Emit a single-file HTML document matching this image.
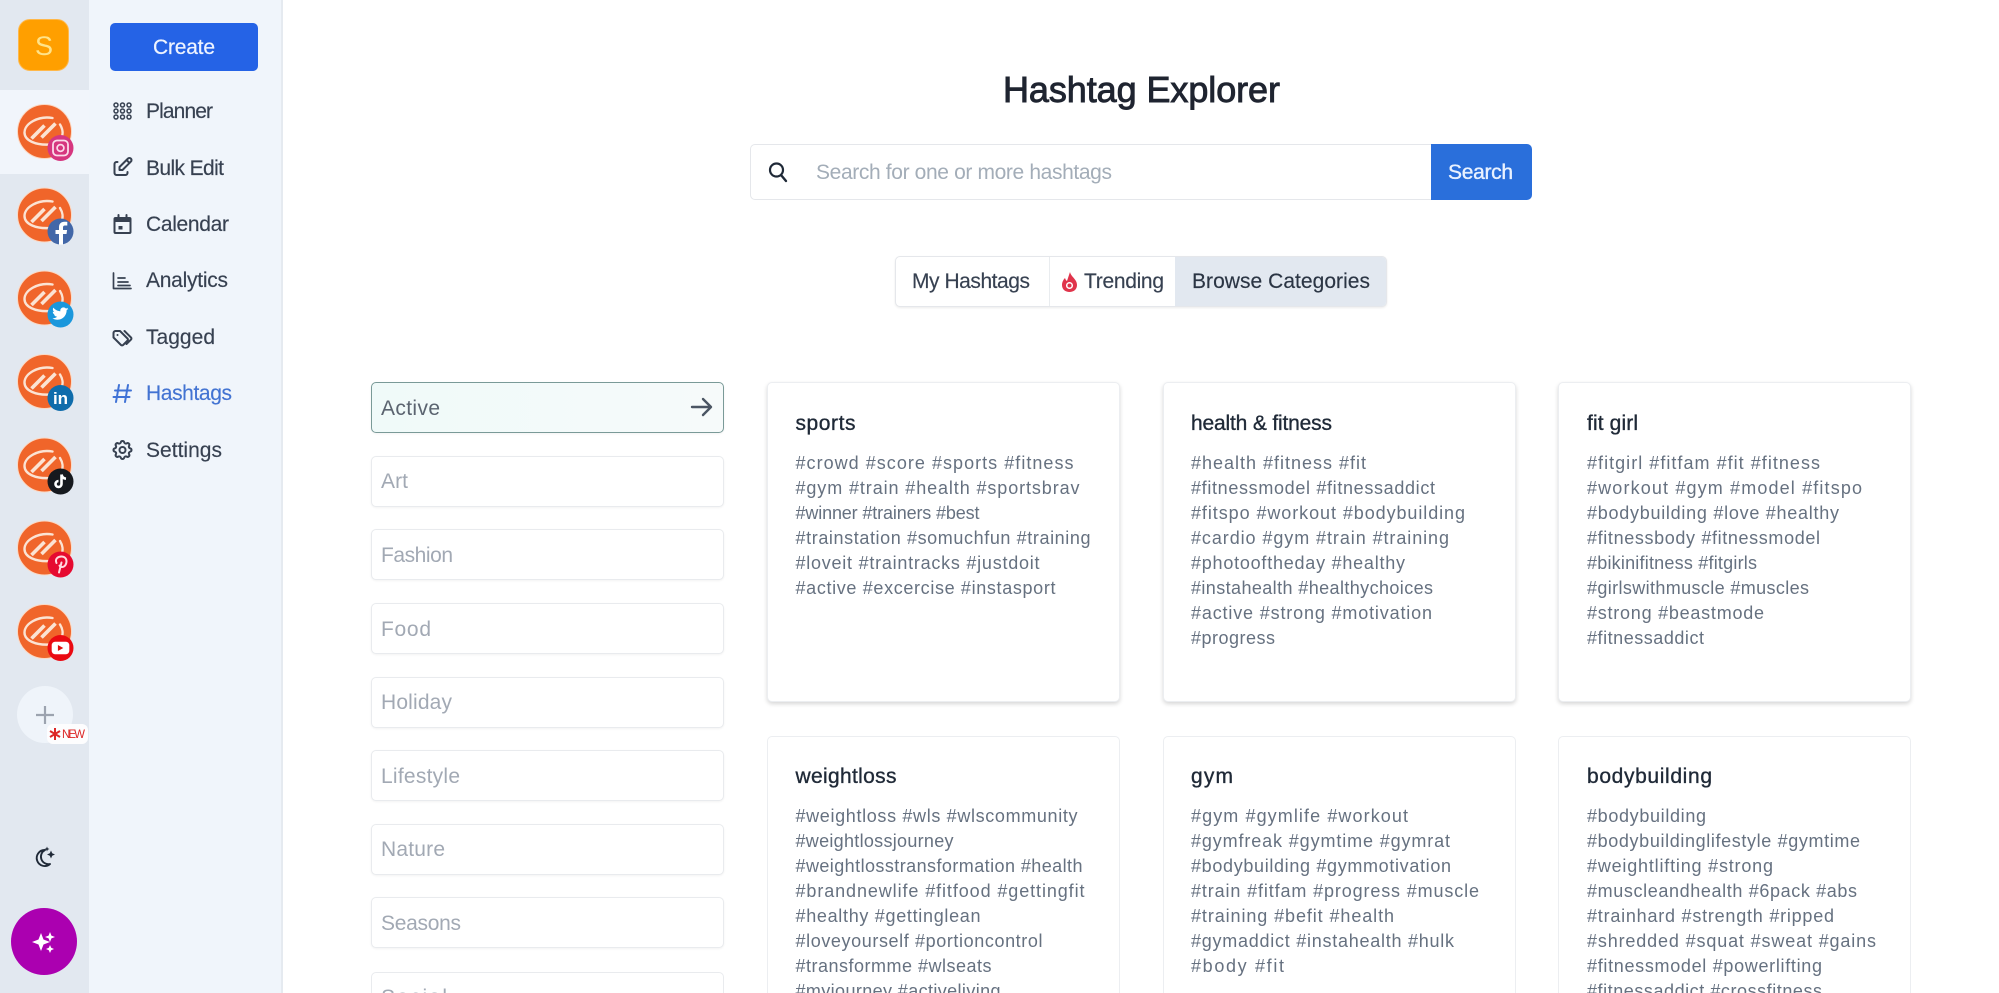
<!DOCTYPE html>
<html lang="en"><head><meta charset="utf-8"><title>Hashtag Explorer</title>
<style>
*{box-sizing:border-box}
html,body{margin:0;padding:0;width:1999px;height:993px;overflow:hidden;background:#fff;font-family:"Liberation Sans",sans-serif}
#w{position:relative;width:1999px;height:993px;overflow:hidden;background:#fff}
.b{position:absolute}
.cat{position:absolute;left:371px;width:353px;height:51px;background:#fff;border:1px solid #e9ebee;border-radius:5px;box-shadow:0 1px 2px rgba(0,0,0,.05)}
.card{position:absolute;width:353px;height:320px;background:#fff;border:1px solid #eceef1;border-radius:5px;box-shadow:0 2px 4px rgba(0,0,0,.16)}
.low{height:257px;border-bottom:0;border-radius:5px 5px 0 0;box-shadow:none}
svg.o{position:absolute;left:0;top:0}
text{font-family:"Liberation Sans",sans-serif}
.t{font-size:18px;fill:#667180}
.h{font-size:21px;fill:#1f2937;stroke:#1f2937;stroke-width:.35}
.n{font-size:21px;fill:#374151;stroke:#374151;stroke-width:.15}
.c{font-size:21px;fill:#a2a9b4}
.i{fill:none;stroke:#374151;stroke-width:2;stroke-linecap:round;stroke-linejoin:round}
</style></head><body><div id="w">
<div class="b" style="left:0;top:0;width:89px;height:993px;background:#e2e8f0"></div>
<div class="b" style="left:0;top:90px;width:89px;height:84px;background:#f1f5fb"></div>
<div class="b" style="left:89px;top:0;width:194px;height:993px;background:#f0f5fb;border-right:2px solid #e5eaf0"></div>
<div class="b" style="left:18px;top:19px;width:51px;height:52px;background:#ff9f00;border:1px solid #ffb84a;border-radius:12px"></div>
<div class="b" style="left:110px;top:23px;width:148px;height:48px;background:#2563e6;border-radius:5px"></div>
<div class="b" style="left:17px;top:686px;width:56px;height:57px;background:#eff4fa;border-radius:50%"></div>
<div class="b" style="left:47px;top:724px;width:41px;height:20px;background:#fdfdfe;border-radius:6px"></div>
<div class="b" style="left:11px;top:908px;width:66px;height:67px;background:#ab00b0;border-radius:50%"></div>

<div class="b" style="left:750px;top:144px;width:682px;height:56px;background:#fff;border:1px solid #e5e7eb;border-right:0;border-radius:5px 0 0 5px"></div>
<div class="b" style="left:1431px;top:144px;width:101px;height:56px;background:#2a6fdb;border-radius:0 5px 5px 0"></div>
<div class="b" style="left:895px;top:256px;width:492px;height:51px;background:#fff;border:1px solid #e5e7eb;border-radius:5px;box-shadow:0 1px 2px rgba(0,0,0,.08);overflow:hidden">
  <div class="b" style="left:153px;top:0;width:1px;height:50px;background:#e9ecef"></div>
  <div class="b" style="left:279px;top:0;width:212px;height:50px;background:#e2e8f0"></div>
</div>

<div class="cat" style="top:382px;background:linear-gradient(90deg,#f0faf9,#f6fafa);border-color:#7a9a98"></div>
<div class="cat" style="top:456px"></div>
<div class="cat" style="top:529px"></div>
<div class="cat" style="top:603px"></div>
<div class="cat" style="top:677px"></div>
<div class="cat" style="top:750px"></div>
<div class="cat" style="top:824px"></div>
<div class="cat" style="top:897px"></div>
<div class="cat" style="top:972px;height:21px;border-bottom:0;border-radius:5px 5px 0 0;box-shadow:none"></div>

<div class="card" style="left:767px;top:382px"></div>
<div class="card" style="left:1163px;top:382px"></div>
<div class="card" style="left:1558px;top:382px"></div>
<div class="card low" style="left:767px;top:736px"></div>
<div class="card low" style="left:1163px;top:736px"></div>
<div class="card low" style="left:1558px;top:736px"></div>

<svg class="o" width="1999" height="993" viewBox="0 0 1999 993" xmlns="http://www.w3.org/2000/svg">
<defs>
<g id="logo">
  <circle r="27" fill="#f0652a" stroke="#fbd9c4" stroke-width="1"/>
  <path d="M8-13.5C-6-16-20-8-20 1C-20 9-9 14 6 13M15.5-7C18-3 19 2 17 6" fill="none" stroke="#fbe3d3" stroke-width="2.4" stroke-linecap="round"/>
  <path d="M-13 7L0-6M-3 6L11-8" fill="none" stroke="#fbe3d3" stroke-width="3.6"/>
</g>
</defs>

<text x="44" y="55" font-size="27" fill="#ffe38a" text-anchor="middle">S</text>

<use href="#logo" x="44.5" y="131.5"/>
<use href="#logo" x="44.5" y="215"/>
<use href="#logo" x="44.5" y="298"/>
<use href="#logo" x="44.5" y="381.5"/>
<use href="#logo" x="44.5" y="465"/>
<use href="#logo" x="44.5" y="548"/>
<use href="#logo" x="44.5" y="631.5"/>

<g transform="translate(60.5 148)"><circle r="13" fill="#d6367f"/><rect x="-7.5" y="-7.5" width="15" height="15" rx="4" fill="none" stroke="#fbdbe9" stroke-width="1.8"/><circle r="3.4" fill="none" stroke="#fbdbe9" stroke-width="1.7"/></g>
<g transform="translate(60.5 231.5)"><circle r="13" fill="#4267a8"/><path d="M2.5 13V2.5H6L6.6-1.5H2.5V-4C2.5-5.3 3-6 4.5-6H6.8V-9.6C6-9.7 5-9.8 3.9-9.8C.8-9.8-1.5-8-1.5-4.5V-1.5H-5V2.5H-1.5V13Z" fill="#fff"/></g>
<g transform="translate(60.5 314.5)"><circle r="13" fill="#1a97dc"/><path d="M8-5.5C7.4-5.2 6.8-5 6.1-4.9C6.8-5.4 7.3-6 7.6-6.8C6.9-6.4 6.2-6.1 5.4-6C4.7-6.7 3.8-7.1 2.9-7.1C.9-7.1-.6-5.2-.1-3.3C-3-3.4-5.5-4.8-7.2-6.9C-8-5.4-7.6-3.4-6.1-2.4C-6.7-2.4-7.2-2.6-7.7-2.8C-7.7-1.2-6.6.2-5-.1C-5.5 0-6 0-6.5-.1C-6 1.3-4.7 2.2-3.3 2.3C-4.7 3.4-6.4 3.9-8.1 3.7C-6.6 4.6-4.9 5.2-3.1 5.2C2.9 5.2 6.3.1 6.1-4.4C6.8-4.4 7.5-5 8-5.5Z" fill="#fff"/></g>
<g transform="translate(60.5 398)"><circle r="13" fill="#0f6cab"/><text x="0" y="6" font-size="17" font-weight="700" fill="#fff" text-anchor="middle">in</text></g>
<g transform="translate(60.5 481.5)"><circle r="13" fill="#16191e"/><path d="M1-7V2.5A3 3 0 1 1-2-.5M1-7C1.4-4.5 3-3 5.5-2.8" fill="none" stroke="#fff" stroke-width="2.6"/></g>
<g transform="translate(60.5 564.5)"><circle r="13" fill="#e60a30"/><path d="M-1.5 8L1-2M-4-1.5C-6-6 -2-8 .8-8C4-8 6-6 6-3.2C6 0 4 2.5 1.5 2.5C.2 2.5-.7 1.8-1 1" fill="none" stroke="#ffd9df" stroke-width="2" stroke-linecap="round"/></g>
<g transform="translate(60.5 648)"><circle r="13" fill="#ea0a12"/><rect x="-8.8" y="-6.3" width="17.6" height="12.6" rx="3.4" fill="#fff"/><path d="M-2.6-3V3L2.8 0Z" fill="#e01010"/></g>

<path d="M45 706V724M36 715H54" stroke="#9ca3af" stroke-width="2.2" fill="none"/>
<path d="M55 728V740M50 731L60 737M60 731L50 737" stroke="#dc2626" stroke-width="2" fill="none"/>
<text x="62" y="738" font-size="11.500" fill="#dc2626" textLength="23">NEW</text>

<path d="M45 850A8 8 0 1 0 50 864A7.500 7.500 0 0 1 45 850Z" fill="none" stroke="#1f2937" stroke-width="1.900" stroke-linejoin="round"/>
<path d="M51 850.500L52.200 853.300L55 854.500L52.200 855.700L51 858.500L49.800 855.700L47 854.500L49.800 853.300Z" fill="#1f2937"/>
<path d="M47 846.500L47.700 848.300L49.500 849L47.700 849.700L47 851.500L46.300 849.700L44.500 849L46.300 848.300Z" fill="#1f2937"/>

<path d="M41 933L43.500 939.500L50 942L43.500 944.500L41 951L38.500 944.500L32 942L38.500 939.500Z" fill="#fff"/>
<path d="M50 932L51.400 935.600L55 937L51.400 938.400L50 942L48.600 938.400L45 937L48.600 935.600Z" fill="#fff"/>
<path d="M50 945L51.200 947.800L54 949L51.200 950.200L50 953L48.800 950.200L46 949L48.800 947.800Z" fill="#fff"/>

<text x="153" y="54" font-size="21" fill="#eef3ff" stroke="#eef3ff" stroke-width=".2" textLength="62">Create</text>

<g fill="none" stroke="#374151" stroke-width="1.5">
<circle cx="116" cy="105" r="2"/><circle cx="122.500" cy="105" r="2"/><circle cx="129" cy="105" r="2"/>
<circle cx="116" cy="111" r="2"/><circle cx="122.500" cy="111" r="2"/><circle cx="129" cy="111" r="2"/>
<circle cx="116" cy="117" r="2"/><circle cx="122.500" cy="117" r="2"/><circle cx="129" cy="117" r="2"/>
</g>
<g transform="translate(110.500 155)"><path class="i" d="M7 7H6a2 2 0 0 0-2 2v9a2 2 0 0 0 2 2h9a2 2 0 0 0 2-2v-1"/><path class="i" d="M20.385 6.585a2.1 2.1 0 0 0-2.97-2.97L9 12v3h3zM16 5l3 3"/></g>
<g transform="translate(110.500 212)"><path class="i" d="M5 6h14a1 1 0 0 1 1 1v13a1 1 0 0 1-1 1H5a1 1 0 0 1-1-1V7a1 1 0 0 1 1-1zM8 3v4M16 3v4"/><path d="M4 6h16v4H4z" fill="#374151"/><rect x="8" y="14" width="4" height="3.500" fill="#374151"/></g>
<path class="i" style="stroke-width:1.700" d="M113.500 273V288.500H131M118 278H125M118 282H128M118 285.500H130"/>
<g transform="translate(110.500 325)"><path class="i" d="M3 8V12.500L10.500 20A1.500 1.500 0 0 0 12.600 20L17 15.600A1.500 1.500 0 0 0 17 13.500L9.500 6H5A2 2 0 0 0 3 8ZM14 6L20.500 12.500A1.500 1.500 0 0 1 20.500 14.600L16 19"/><circle cx="7" cy="10" r="1" fill="#374151"/></g>
<path d="M119 385L116 402M128 385L125 402M115 390.500H131M113.500 397H129.500" fill="none" stroke="#3f72d6" stroke-width="2" stroke-linecap="round"/>
<g transform="translate(110.500 438)"><path class="i" d="M10.325 4.317c.426-1.756 2.924-1.756 3.35 0a1.724 1.724 0 0 0 2.573 1.066c1.543-.94 3.31.826 2.37 2.37a1.724 1.724 0 0 0 1.065 2.572c1.756.426 1.756 2.924 0 3.35a1.724 1.724 0 0 0-1.066 2.573c.94 1.543-.826 3.31-2.37 2.37a1.724 1.724 0 0 0-2.572 1.065c-.426 1.756-2.924 1.756-3.35 0a1.724 1.724 0 0 0-2.573-1.066c-1.543.94-3.31-.826-2.37-2.37a1.724 1.724 0 0 0-1.065-2.572c-1.756-.426-1.756-2.924 0-3.35a1.724 1.724 0 0 0 1.066-2.573c-.94-1.543.826-3.31 2.37-2.37c1 .608 2.296.07 2.572-1.065z"/><circle class="i" cx="12" cy="12" r="3"/></g>

<text class="n" x="146" y="118" textLength="67">Planner</text>
<text class="n" x="146" y="175" textLength="78">Bulk Edit</text>
<text class="n" x="146" y="231" textLength="83">Calendar</text>
<text class="n" x="146" y="287" textLength="82">Analytics</text>
<text class="n" x="146" y="344" textLength="69">Tagged</text>
<text class="n" x="146" y="400" textLength="86" style="fill:#4273d2;stroke:#4273d2">Hashtags</text>
<text class="n" x="146" y="457" textLength="76">Settings</text>

<text x="1003" y="102" font-size="36" fill="#1f2430" stroke="#1f2430" stroke-width=".9" textLength="277">Hashtag Explorer</text>

<circle cx="776.500" cy="170" r="6.500" fill="none" stroke="#1f2937" stroke-width="2.200"/>
<path d="M781 175L786 181" stroke="#1f2937" stroke-width="2.400" stroke-linecap="round"/>
<text x="816" y="179" font-size="21" fill="#a3adb8" textLength="296">Search for one or more hashtags</text>
<text x="1448" y="179" font-size="21" fill="#eaf2ff" stroke="#eaf2ff" stroke-width=".35" textLength="65">Search</text>

<text class="n" x="912" y="288" textLength="118">My Hashtags</text>
<path d="M1070 272C1071 277 1077 279 1077 285C1077 289.500 1073.500 292 1069.500 292C1065.500 292 1062 289.500 1062 285C1062 282 1063.500 279.500 1065 278C1065.500 279.500 1066 280.500 1067 281C1068 278 1069 275 1070 272Z" fill="#e0344b"/>
<circle cx="1069.500" cy="285.500" r="2.800" fill="none" stroke="#fff" stroke-width="1.500"/>
<text class="n" x="1084" y="288" textLength="80">Trending</text>
<text class="n" x="1192" y="288" textLength="178" style="fill:#2b3544;stroke:#2b3544">Browse Categories</text>

<text class="c" x="381" y="415" textLength="59" style="fill:#5b6470">Active</text>
<path d="M692 407H710M703 399L711 407L703 415" fill="none" stroke="#4b5563" stroke-width="2.400" stroke-linecap="round" stroke-linejoin="round"/>
<text class="c" x="381" y="488" textLength="27">Art</text>
<text class="c" x="381" y="562" textLength="72">Fashion</text>
<text class="c" x="381" y="636" textLength="50">Food</text>
<text class="c" x="381" y="709" textLength="71">Holiday</text>
<text class="c" x="381" y="783" textLength="79">Lifestyle</text>
<text class="c" x="381" y="856" textLength="64">Nature</text>
<text class="c" x="381" y="930" textLength="80">Seasons</text>
<text class="c" x="381" y="1004" textLength="66">Social</text>

<text class="h" x="795.500" y="430" textLength="60">sports</text>
<text class="t" x="795.500" y="469" textLength="278">#crowd #score #sports #fitness</text>
<text class="t" x="795.500" y="494" textLength="284">#gym #train #health #sportsbrav</text>
<text class="t" x="795.500" y="519" textLength="184">#winner #trainers #best</text>
<text class="t" x="795.500" y="544" textLength="295">#trainstation #somuchfun #training</text>
<text class="t" x="795.500" y="569" textLength="244">#loveit #traintracks #justdoit</text>
<text class="t" x="795.500" y="594" textLength="260">#active #excercise #instasport</text>

<text class="h" x="1191" y="430" textLength="141">health &amp; fitness</text>
<text class="t" x="1191" y="469" textLength="175">#health #fitness #fit</text>
<text class="t" x="1191" y="494" textLength="244">#fitnessmodel #fitnessaddict</text>
<text class="t" x="1191" y="519" textLength="274">#fitspo #workout #bodybuilding</text>
<text class="t" x="1191" y="544" textLength="258">#cardio #gym #train #training</text>
<text class="t" x="1191" y="569" textLength="214">#photooftheday #healthy</text>
<text class="t" x="1191" y="594" textLength="242">#instahealth #healthychoices</text>
<text class="t" x="1191" y="619" textLength="241">#active #strong #motivation</text>
<text class="t" x="1191" y="644" textLength="84">#progress</text>

<text class="h" x="1587" y="430" textLength="51">fit girl</text>
<text class="t" x="1587" y="469" textLength="233">#fitgirl #fitfam #fit #fitness</text>
<text class="t" x="1587" y="494" textLength="275">#workout #gym #model #fitspo</text>
<text class="t" x="1587" y="519" textLength="252">#bodybuilding #love #healthy</text>
<text class="t" x="1587" y="544" textLength="233">#fitnessbody #fitnessmodel</text>
<text class="t" x="1587" y="569" textLength="170">#bikinifitness #fitgirls</text>
<text class="t" x="1587" y="594" textLength="222">#girlswithmuscle #muscles</text>
<text class="t" x="1587" y="619" textLength="177">#strong #beastmode</text>
<text class="t" x="1587" y="644" textLength="117">#fitnessaddict</text>

<text class="h" x="795.500" y="783" textLength="101">weightloss</text>
<text class="t" x="795.500" y="822" textLength="282">#weightloss #wls #wlscommunity</text>
<text class="t" x="795.500" y="847" textLength="158">#weightlossjourney</text>
<text class="t" x="795.500" y="872" textLength="287">#weightlosstransformation #health</text>
<text class="t" x="795.500" y="897" textLength="289">#brandnewlife #fitfood #gettingfit</text>
<text class="t" x="795.500" y="922" textLength="185">#healthy #gettinglean</text>
<text class="t" x="795.500" y="947" textLength="247">#loveyourself #portioncontrol</text>
<text class="t" x="795.500" y="972" textLength="196">#transformme #wlseats</text>
<text class="t" x="795.500" y="997" textLength="205">#myjourney #activeliving</text>

<text class="h" x="1191" y="783" textLength="42">gym</text>
<text class="t" x="1191" y="822" textLength="217">#gym #gymlife #workout</text>
<text class="t" x="1191" y="847" textLength="259">#gymfreak #gymtime #gymrat</text>
<text class="t" x="1191" y="872" textLength="260">#bodybuilding #gymmotivation</text>
<text class="t" x="1191" y="897" textLength="288">#train #fitfam #progress #muscle</text>
<text class="t" x="1191" y="922" textLength="203">#training #befit #health</text>
<text class="t" x="1191" y="947" textLength="263">#gymaddict #instahealth #hulk</text>
<text class="t" x="1191" y="972" textLength="93">#body #fit</text>

<text class="h" x="1587" y="783" textLength="125">bodybuilding</text>
<text class="t" x="1587" y="822" textLength="119">#bodybuilding</text>
<text class="t" x="1587" y="847" textLength="273">#bodybuildinglifestyle #gymtime</text>
<text class="t" x="1587" y="872" textLength="186">#weightlifting #strong</text>
<text class="t" x="1587" y="897" textLength="270">#muscleandhealth #6pack #abs</text>
<text class="t" x="1587" y="922" textLength="247">#trainhard #strength #ripped</text>
<text class="t" x="1587" y="947" textLength="289">#shredded #squat #sweat #gains</text>
<text class="t" x="1587" y="972" textLength="235">#fitnessmodel #powerlifting</text>
<text class="t" x="1587" y="997" textLength="235">#fitnessaddict #crossfitness</text>
</svg>
</div></body></html>
